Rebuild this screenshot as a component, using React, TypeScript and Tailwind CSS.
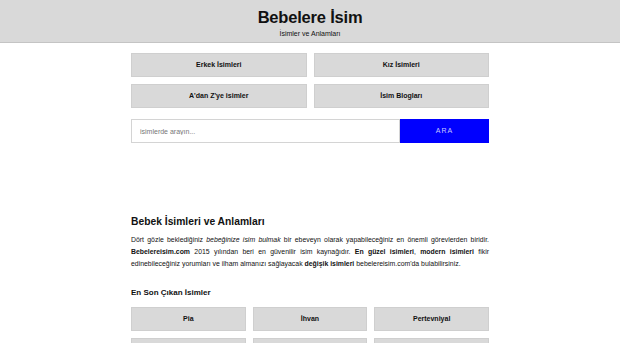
const latest = ["Pia", "İhvan", "Pertevniyal", "Ada", "Mert", "Elif"];

const NavButton = ({ label }: { label: string }) => (
  <a className="flex h-6 items-center justify-center border border-[#cfcfcf] bg-[#d9d9d9] text-[7px] font-bold text-[#111]">
    {label}
  </a>
);

export default function App() {
  return (
    <div className="h-[343px] overflow-hidden bg-white font-['Liberation_Sans',Arial,sans-serif] text-[#111]">
      <header className="flex h-[43px] flex-col items-center border-b border-[#c4c4c4] bg-[#d9d9d9] pt-[6px]">
        <h1 className="text-[16.5px] font-bold leading-[22px] tracking-[-0.2px]">Bebelere İsim</h1>
        <p className="mt-[1px] text-[7px] leading-[9px]">İsimler ve Anlamları</p>
      </header>

      <main className="mx-auto w-[358px] pt-[10px]">
        <div className="grid grid-cols-2 gap-x-[7px] gap-y-[7px]">
          <NavButton label="Erkek İsimleri" />
          <NavButton label="Kız İsimleri" />
          <NavButton label="A'dan Z'ye isimler" />
          <NavButton label="İsim Blogları" />
        </div>

        <form className="mt-[11px] flex h-6" onSubmit={(e) => e.preventDefault()}>
          <input
            placeholder="isimlerde arayın..."
            className="h-6 flex-1 border border-[#d4d4d4] px-[8px] text-[7px] outline-none placeholder:text-[#777]"
          />
          <button className="h-6 w-[89px] bg-[#0000ff] text-[7px] tracking-[1px] text-[#c8c8ff]">ARA</button>
        </form>

        <section className="mt-[72px]">
          <h2 className="text-[10.3px] font-bold leading-[14px]">Bebek İsimleri ve Anlamları</h2>
          <p className="mt-[5px] text-justify text-[6.9px] leading-[12px]">
            Dört gözle beklediğiniz <i>bebeğinize isim bulmak</i> bir ebeveyn olarak yapabileceğiniz en önemli
            görevlerden biridir. <b>Bebelereisim.com</b> 2015 yılından beri en güvenilir isim kaynağıdır.{" "}
            <b>En güzel isimleri</b>, <b>modern isimleri</b> fikir edinebileceğiniz yorumları ve ilham almanızı
            sağlayacak <b>değişik isimleri</b> bebelereisim.com'da bulabilirsiniz.
          </p>

          <h3 className="mt-[17px] text-[8px] font-bold leading-[11px]">En Son Çıkan İsimler</h3>
          <div className="mt-[9px] grid grid-cols-3 gap-x-[7px] gap-y-[7px]">
            {latest.map((name) => (
              <NavButton key={name} label={name} />
            ))}
          </div>
        </section>
      </main>
    </div>
  );
}
